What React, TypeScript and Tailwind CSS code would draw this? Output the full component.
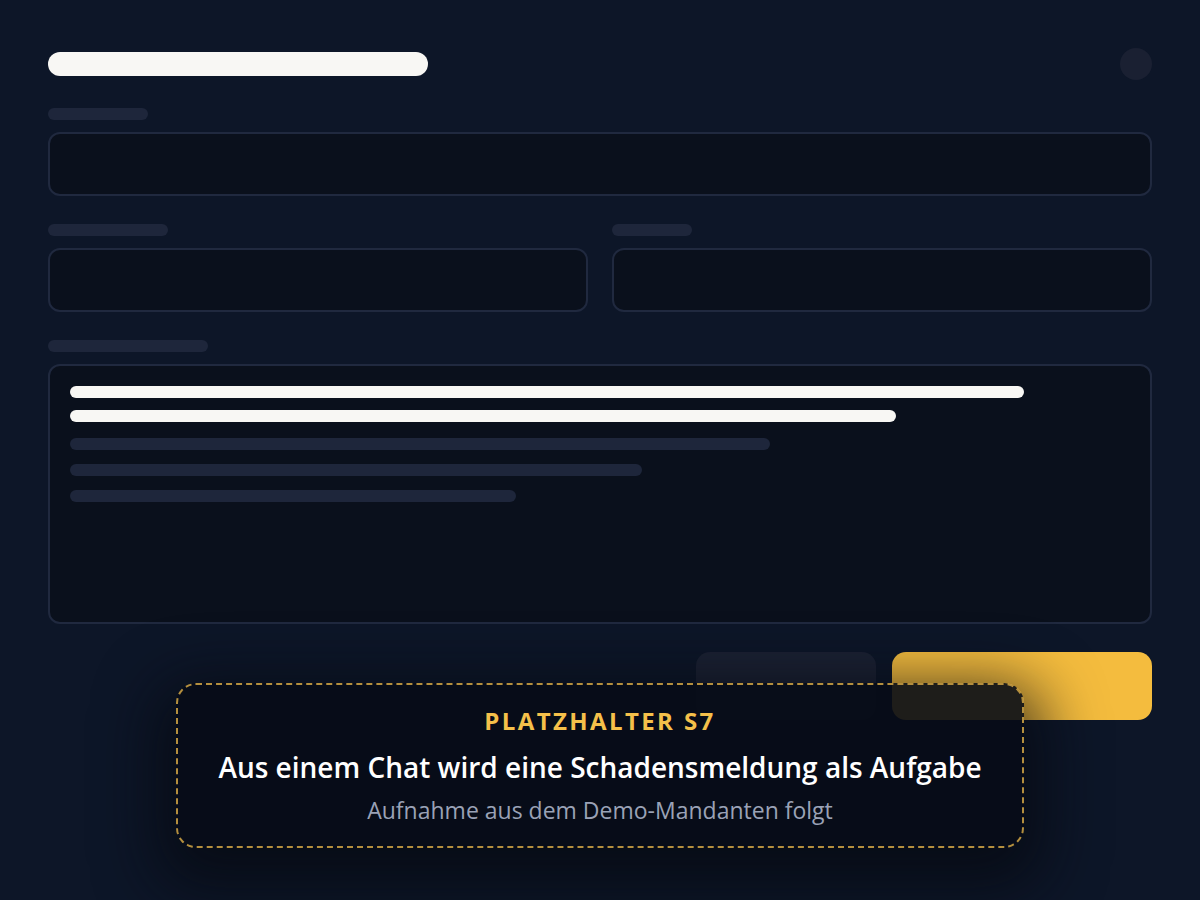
export default function App() {
  return (
    <div
      className="relative w-[1200px] h-[900px] overflow-hidden bg-[#0d1628]"
      style={{ fontFamily: '"Open Sans", "Noto Sans", sans-serif' }}
    >
      <div className="px-12 pt-12">
        {/* Header */}
        <div className="flex items-center justify-between h-8">
          <div className="w-[380px] h-6 rounded-full bg-[#f8f7f4]" />
          <div className="w-8 h-8 rounded-full bg-[#1a2032]" />
        </div>

        {/* Field 1 */}
        <div className="mt-7 w-[100px] h-3 rounded-full bg-[#1e263b]" />
        <div className="mt-3 h-16 rounded-xl border-2 border-[#20293f] bg-[#0a101c]" />

        {/* Field row */}
        <div className="mt-7 grid grid-cols-2 gap-6">
          <div>
            <div className="w-[120px] h-3 rounded-full bg-[#1e263b]" />
            <div className="mt-3 h-16 rounded-xl border-2 border-[#20293f] bg-[#0a101c]" />
          </div>
          <div>
            <div className="w-[80px] h-3 rounded-full bg-[#1e263b]" />
            <div className="mt-3 h-16 rounded-xl border-2 border-[#20293f] bg-[#0a101c]" />
          </div>
        </div>

        {/* Textarea */}
        <div className="mt-7 w-[160px] h-3 rounded-full bg-[#1e263b]" />
        <div className="mt-3 h-[260px] rounded-xl border-2 border-[#20293f] bg-[#0a101c] px-[20px] pt-[20px]">
          <div className="w-[954px] h-3 rounded-full bg-[#f8f7f4]" />
          <div className="mt-3 w-[826px] h-3 rounded-full bg-[#f8f7f4]" />
          <div className="mt-4 w-[700px] h-3 rounded-full bg-[#1e263b]" />
          <div className="mt-[14px] w-[572px] h-3 rounded-full bg-[#1e263b]" />
          <div className="mt-[14px] w-[446px] h-3 rounded-full bg-[#1e263b]" />
        </div>

        {/* Actions */}
        <div className="mt-7 flex justify-end gap-4">
          <div className="w-[180px] h-[68px] rounded-[14px] bg-[#1b2133]" />
          <div className="w-[260px] h-[68px] rounded-[14px] bg-[#f4bc3e]" />
        </div>
      </div>

      {/* Placeholder overlay */}
      <div className="absolute left-[176px] top-[683px] w-[848px] h-[165px] rounded-[20px] border-2 border-dashed border-[#b48f3e] bg-[#070b16]/90 shadow-[0_20px_60px_20px_rgba(5,8,16,0.7)] flex flex-col items-center justify-center">
        <div className="text-[24px] leading-none font-bold tracking-[0.1em] text-[#f5c04a]">
          PLATZHALTER S7
        </div>
        <div className="mt-[20px] text-[28px] leading-none font-semibold text-white">
          Aus einem Chat wird eine Schadensmeldung als Aufgabe
        </div>
        <div className="mt-[18px] text-[23px] leading-none text-[#9aa2b6]">
          Aufnahme aus dem Demo-Mandanten folgt
        </div>
      </div>
    </div>
  );
}
